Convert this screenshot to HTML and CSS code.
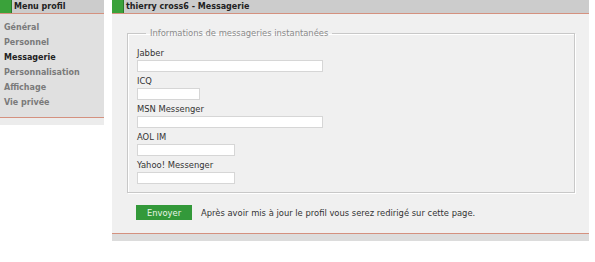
FILE: index.html
```html
<!DOCTYPE html>
<html lang="fr">
<head>
  <meta charset="UTF-8" />
  <title>Messagerie</title>
  <link rel="stylesheet" href="styles.css">
</head>
<body>
  <div class="page">
    <div class="menu">
      <div class="box-head"><span class="mark"></span>Menu profil</div>
      <ul class="menu-list">
        <li>Général</li>
        <li>Personnel</li>
        <li class="active">Messagerie</li>
        <li>Personnalisation</li>
        <li>Affichage</li>
        <li>Vie privée</li>
      </ul>
      <div class="box-foot"></div>
    </div>

    <div class="main">
      <div class="box-head"><span class="mark"></span>thierry cross6 - Messagerie</div>
      <div class="main-body">
        <fieldset>
          <legend>Informations de messageries instantanées</legend>
          <div class="field">
            <label>Jabber</label>
            <input type="text" class="wide">
          </div>
          <div class="field">
            <label>ICQ</label>
            <input type="text" class="short">
          </div>
          <div class="field">
            <label>MSN Messenger</label>
            <input type="text" class="wide">
          </div>
          <div class="field">
            <label>AOL IM</label>
            <input type="text" class="mid">
          </div>
          <div class="field">
            <label>Yahoo! Messenger</label>
            <input type="text" class="mid">
          </div>
        </fieldset>
        <div class="submit-row">
          <button>Envoyer</button>
          <span>Après avoir mis à jour le profil vous serez redirigé sur cette page.</span>
        </div>
      </div>
      <div class="box-foot"></div>
    </div>
  </div>
</body>
</html>
```

FILE: styles.css
```css
body {
  margin: 0;
  background: #fff;
  font-family: "DejaVu Sans", Verdana, sans-serif;
  font-size: 8.4px;
  color: #333;
}
.page {
  display: flex;
  align-items: flex-start;
  gap: 8px;
}
.menu {
  width: 104px;
  background: #e0e0e0;
}
.main {
  width: 477px;
  background: #f0f0f0;
}
.box-head {
  display: flex;
  align-items: center;
  height: 13px;
  background: #cccccc;
  border-bottom: 1px solid #d4917f;
  font-weight: bold;
  font-size: 8px;
  color: #222;
}
.mark {
  width: 11px;
  height: 13px;
  margin-right: 2px;
  background: #3aa23a;
  border-right: 1px solid #2a7a2a;
}
.menu-list {
  list-style: none;
  margin: 0;
  padding: 6px 0 7px 4px;
  font-size: 8px;
}
.menu-list li {
  height: 15px;
  line-height: 15px;
  font-weight: bold;
  color: #7a7a7a;
}
.menu-list li.active {
  color: #222;
}
.box-foot {
  height: 7px;
  border-top: 1px solid #d4917f;
  background: #dcdcdc;
}
.menu .box-foot {
  background: #ececec;
}
.main-body {
  padding: 14px 14px 13px 15px;
}
fieldset {
  margin: 0;
  padding: 9px 9px 5px 9px;
  border: 1px solid #c8c8c8;
  box-shadow: 1px 1px 0 #fff inset, 1px 1px 0 #fff;
}
legend {
  margin-left: 9px;
  padding: 0 4px;
  color: #8a8a8a;
}
.field {
  display: flex;
  flex-direction: column;
  margin-bottom: 3px;
}
.field label {
  height: 13px;
  line-height: 13px;
  color: #333;
}
.field input {
  box-sizing: border-box;
  height: 12px;
  margin: 0;
  padding: 0;
  border: 1px solid #d6d6d6;
  background: #fff;
}
.wide { width: 186px; }
.mid { width: 98px; }
.short { width: 63px; }
.submit-row {
  display: flex;
  align-items: center;
  gap: 9px;
  margin-top: 12px;
  padding-left: 9px;
}
button {
  width: 56px;
  height: 15px;
  padding: 0;
  border: none;
  background: #33993a;
  color: #e8f5e8;
  font-family: inherit;
  font-size: 8.4px;
}
```
